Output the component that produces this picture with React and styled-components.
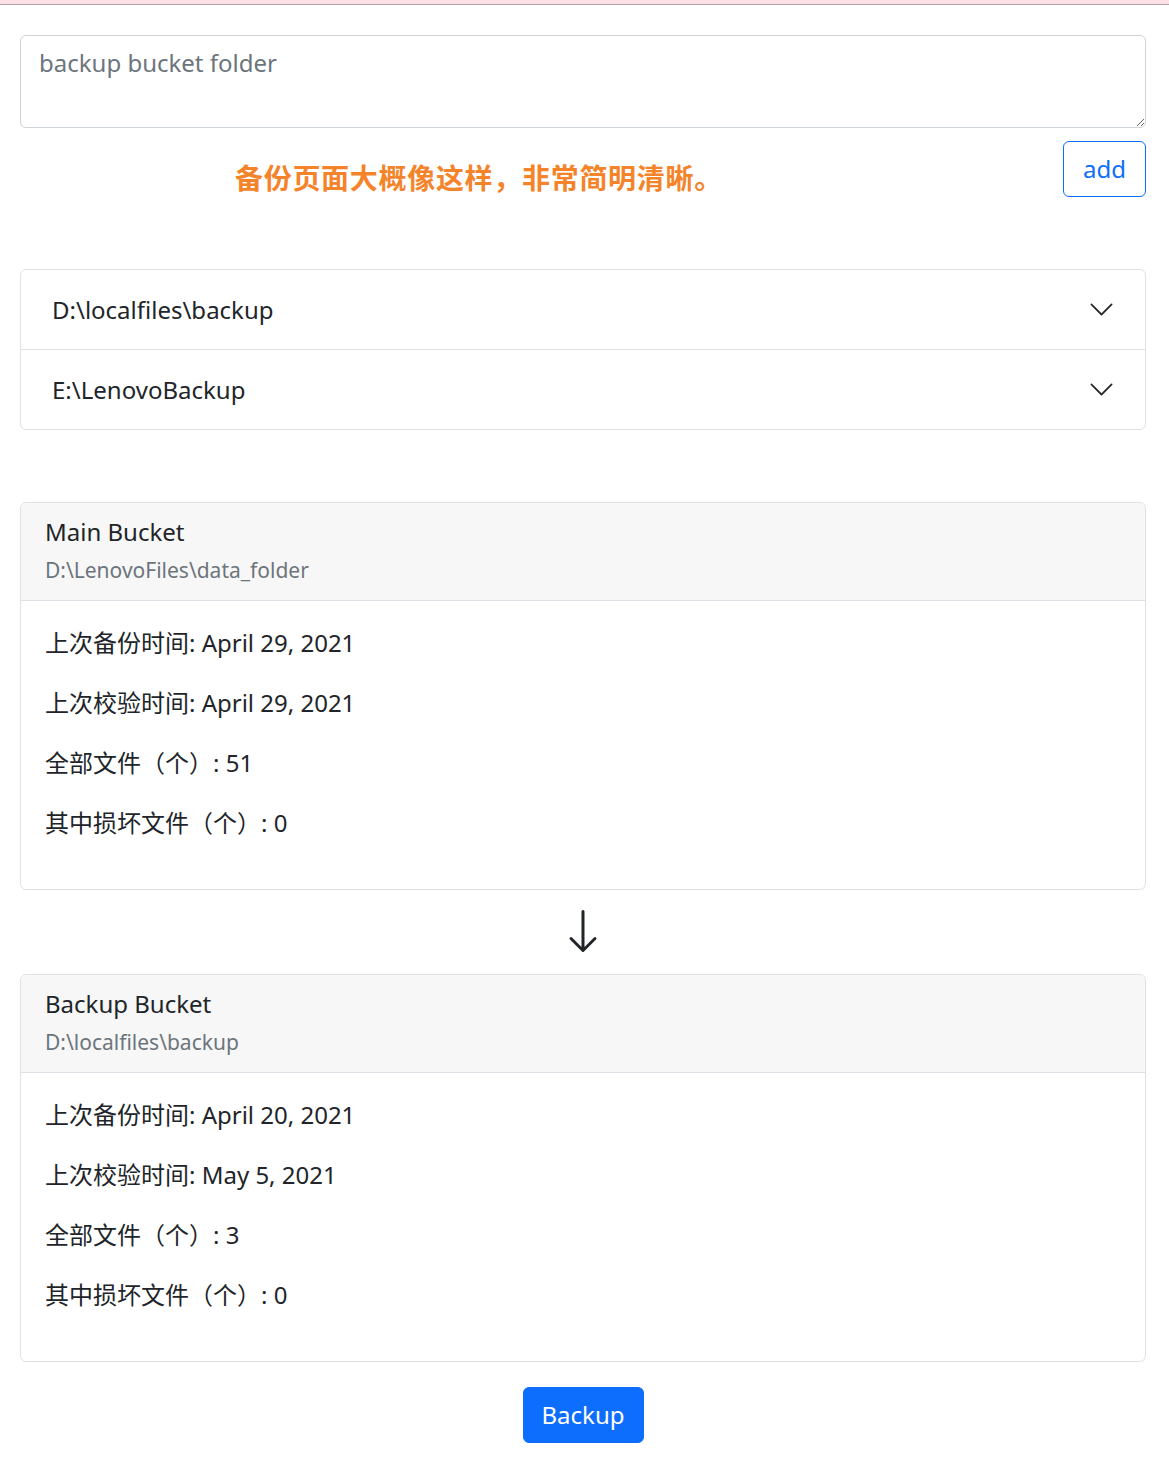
import React from 'react';
import styled, { createGlobalStyle } from 'styled-components';

const GlobalStyle = createGlobalStyle`
  body {
    margin: 0;
    background: #fff;
    color: #212529;
    font-family: "Noto Sans", "Noto Sans CJK SC", sans-serif;
    font-size: 24px;
    line-height: 1.5;
  }
  * { box-sizing: border-box; }
`

const TopBand = styled.div`
  height: 5px;
  background: #fde0e6;
  border-bottom: 1px solid #b9a2aa;
`

const Page = styled.div`
  padding: 30px 23px 20px 20px;
`

const FolderInput = styled.textarea`
  display: block;
  width: 100%;
  height: 93px;
  padding: 9px 18px;
  font: inherit;
  color: #212529;
  border: 1px solid #ced4da;
  border-radius: 6px;
  resize: vertical;
  &::placeholder { color: #6c757d; }
`

const AddRow = styled.div`
  display: flex;
  justify-content: space-between;
  align-items: flex-start;
  margin-top: 13px;
`

const Note = styled.span`
  margin: 16px 0 0 215px;
  color: #f5832a;
  font-weight: 700;
  font-size: 28px;
  letter-spacing: 0.7px;
  line-height: 40px;
  font-family: "Noto Sans CJK SC", sans-serif;
`

const OutlineButton = styled.button`
  font: inherit;
  color: #0d6efd;
  background: #fff;
  border: 1px solid #0d6efd;
  border-radius: 6px;
  padding: 9px 19px;
  line-height: 36px;
`

const Accordion = styled.div`
  margin-top: 72px;
  border: 1px solid #dee2e6;
  border-radius: 6px;
`

const AccordionItem = styled.div`
  display: flex;
  align-items: center;
  justify-content: space-between;
  height: ${p => p.last ? 79 : 80}px;
  padding: 0 30px 0 31px;
  border-bottom: ${p => p.last ? 'none' : '1px solid #dee2e6'};
`

const Card = styled.div`
  border: 1px solid #dee2e6;
  border-radius: 6px;
  margin-top: ${p => p.first ? 72 : 0}px;
`

const CardHeader = styled.div`
  background: #f7f7f7;
  padding: 11px 24px 13px;
  border-bottom: 1px solid #dee2e6;
  border-radius: 6px 6px 0 0;
`

const CardTitle = styled.div`
  line-height: 36px;
  margin-bottom: 4px;
`

const CardSubtitle = styled.div`
  color: #6c757d;
  font-size: 21px;
  line-height: 33px;
`

const CardBody = styled.div`
  padding: 24px;
`

const Line = styled.p`
  margin: 0 0 24px;
  line-height: 36px;
`

const ArrowWrap = styled.div`
  display: flex;
  justify-content: center;
  padding: 17px 0 19px;
`

const BackupButton = styled.button`
  display: block;
  margin: 25px auto 0;
  font: inherit;
  color: #fff;
  background: #0d6efd;
  border: 1px solid #0d6efd;
  border-radius: 6px;
  padding: 9px 18px;
  line-height: 36px;
`

const Chevron = () => (
  <svg width="27" height="27" viewBox="0 0 16 16" fill="#212529">
    <path fillRule="evenodd" d="M1.646 4.646a.5.5 0 0 1 .708 0L8 10.293l5.646-5.647a.5.5 0 0 1 .708.708l-6 6a.5.5 0 0 1-.708 0l-6-6a.5.5 0 0 1 0-.708z" />
  </svg>
)

const ArrowDown = () => (
  <svg width="48" height="48" viewBox="0 0 16 16" fill="#212529">
    <path fillRule="evenodd" d="M8 1a.5.5 0 0 1 .5.5v11.793l3.146-3.147a.5.5 0 0 1 .708.708l-4 4a.5.5 0 0 1-.708 0l-4-4a.5.5 0 0 1 .708-.708L7.5 13.293V1.5A.5.5 0 0 1 8 1z" />
  </svg>
)

const Bucket = ({ title, path, backupTime, checkTime, total, broken, first }) => (
  <Card first={first}>
    <CardHeader>
      <CardTitle>{title}</CardTitle>
      <CardSubtitle>{path}</CardSubtitle>
    </CardHeader>
    <CardBody>
      <Line>上次备份时间: {backupTime}</Line>
      <Line>上次校验时间: {checkTime}</Line>
      <Line>全部文件（个）: {total}</Line>
      <Line>其中损坏文件（个）: {broken}</Line>
    </CardBody>
  </Card>
)

const folders = ['D:\\localfiles\\backup', 'E:\\LenovoBackup']

export default function App() {
  return (
    <>
      <GlobalStyle />
      <TopBand />
      <Page>
        <FolderInput placeholder="backup bucket folder" />
        <AddRow>
          <Note>备份页面大概像这样，非常简明清晰。</Note>
          <OutlineButton>add</OutlineButton>
        </AddRow>
        <Accordion>
          {folders.map((f, i) => (
            <AccordionItem key={f} last={i === folders.length - 1}>
              <span>{f}</span>
              <Chevron />
            </AccordionItem>
          ))}
        </Accordion>
        <Bucket
          first
          title="Main Bucket"
          path="D:\LenovoFiles\data_folder"
          backupTime="April 29, 2021"
          checkTime="April 29, 2021"
          total="51"
          broken="0"
        />
        <ArrowWrap><ArrowDown /></ArrowWrap>
        <Bucket
          title="Backup Bucket"
          path="D:\localfiles\backup"
          backupTime="April 20, 2021"
          checkTime="May 5, 2021"
          total="3"
          broken="0"
        />
        <BackupButton>Backup</BackupButton>
      </Page>
    </>
  )
}
